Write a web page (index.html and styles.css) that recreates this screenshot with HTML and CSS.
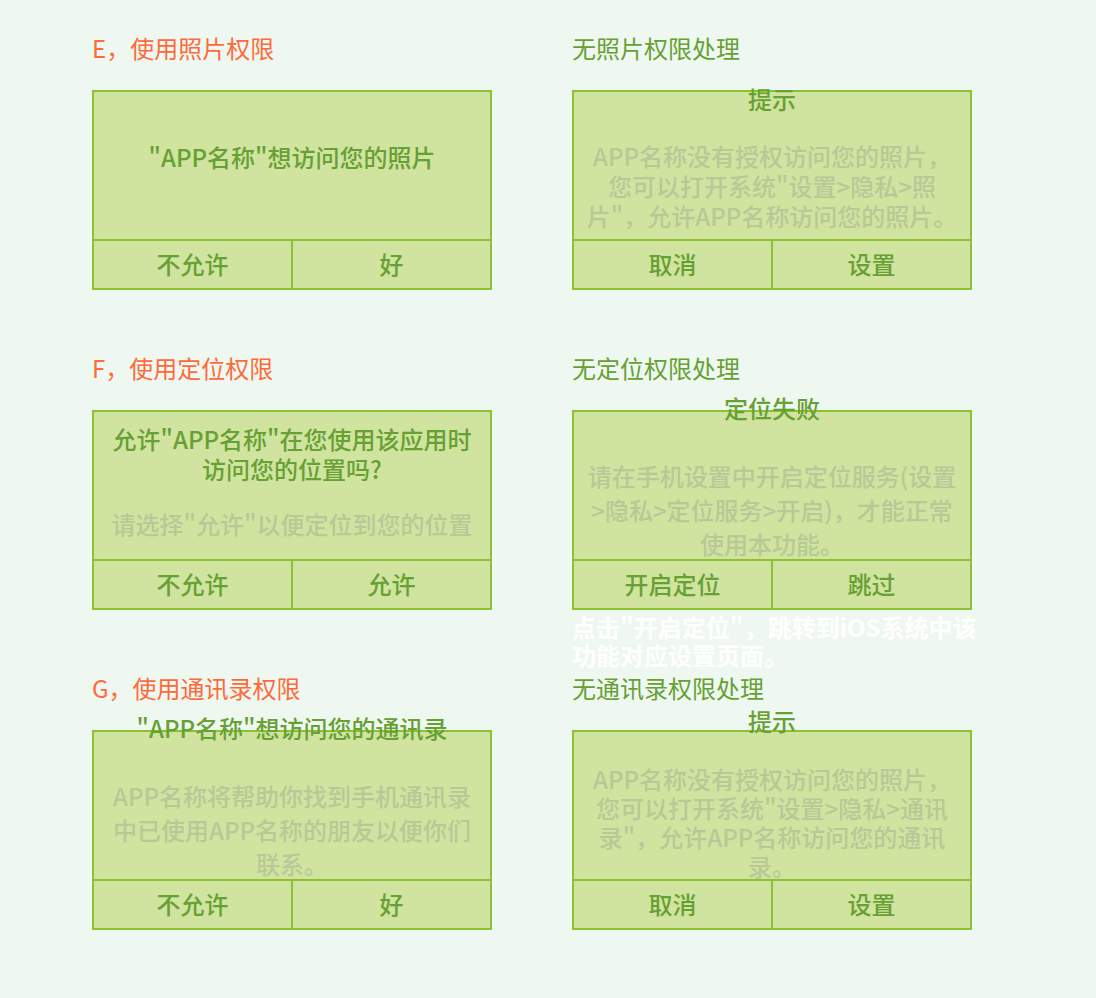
FILE: index.html
```html
<!DOCTYPE html>
<html lang="zh-CN">
<head>
<meta charset="utf-8">
<title>权限处理</title>
<link rel="stylesheet" href="styles.css">
</head>
<body>
<main class="board">
  <section class="cell">
    <h2 class="heading heading-orange">E，使用照片权限</h2>
    <div class="dialog">
      <div class="content">
        <div class="title">"APP名称"想访问您的照片</div>
      </div>
      <div class="actions"><div class="btn">不允许</div><div class="btn">好</div></div>
    </div>
  </section>
  <section class="cell">
    <h2 class="heading heading-green">无照片权限处理</h2>
    <div class="dialog">
      <div class="content">
        <div class="title">提示</div>
        <div class="body">APP名称没有授权访问您的照片，您可以打开系统"设置&gt;隐私&gt;照片"，允许APP名称访问您的照片。</div>
      </div>
      <div class="actions"><div class="btn">取消</div><div class="btn">设置</div></div>
    </div>
  </section>

  <section class="cell">
    <h2 class="heading heading-orange">F，使用定位权限</h2>
    <div class="dialog">
      <div class="content content-low">
        <div class="title">允许"APP名称"在您使用该应用时访问您的位置吗?</div>
        <div class="body body-tight">请选择"允许"以便定位到您的位置</div>
      </div>
      <div class="actions"><div class="btn">不允许</div><div class="btn">允许</div></div>
    </div>
  </section>
  <section class="cell">
    <h2 class="heading heading-green">无定位权限处理</h2>
    <div class="dialog">
      <div class="content">
        <div class="title">定位失败</div>
        <div class="body body-loose">请在手机设置中开启定位服务(设置&gt;隐私&gt;定位服务&gt;开启)，才能正常使用本功能。</div>
      </div>
      <div class="actions"><div class="btn">开启定位</div><div class="btn">跳过</div></div>
    </div>
    <p class="note">点击"开启定位"，跳转到iOS系统中该功能对应设置页面。</p>
  </section>

  <section class="cell">
    <h2 class="heading heading-orange">G，使用通讯录权限</h2>
    <div class="dialog">
      <div class="content">
        <div class="title">"APP名称"想访问您的通讯录</div>
        <div class="body body-loose">APP名称将帮助你找到手机通讯录中已使用APP名称的朋友以便你们联系。</div>
      </div>
      <div class="actions"><div class="btn">不允许</div><div class="btn">好</div></div>
    </div>
  </section>
  <section class="cell">
    <h2 class="heading heading-green">无通讯录权限处理</h2>
    <div class="dialog">
      <div class="content content-high">
        <div class="title">提示</div>
        <div class="body body-dense">APP名称没有授权访问您的照片，您可以打开系统"设置&gt;隐私&gt;通讯录"，允许APP名称访问您的通讯录。</div>
      </div>
      <div class="actions"><div class="btn">取消</div><div class="btn">设置</div></div>
    </div>
  </section>
</main>
</body>
</html>
```

FILE: styles.css
```css
html, body {
  margin: 0;
  padding: 0;
}

body {
  background: #eef8f0;
  font-family: "Noto Sans CJK SC", "Noto Sans", sans-serif;
  font-size: 24px;
  min-height: 998px;
}

.board {
  display: grid;
  grid-template-columns: 400px 400px;
  grid-auto-rows: 320px;
  column-gap: 80px;
  padding: 33px 0 0 92px;
}

.cell {
  display: flex;
  flex-direction: column;
  align-items: flex-start;
  min-width: 0;
}

.heading {
  margin: 0 0 27px;
  font-size: 24px;
  line-height: 30px;
  font-weight: 400;
}

.heading-orange {
  color: #ff6a3a;
}

.heading-green {
  color: #67a033;
}

.dialog {
  box-sizing: border-box;
  width: 400px;
  height: 200px;
  border: 2px solid #8cc232;
  background: #d0e4a0;
  display: flex;
  flex-direction: column;
}

.content {
  flex: 1;
  min-height: 0;
  display: flex;
  flex-direction: column;
  justify-content: center;
  padding: 0 12px 17px;
  text-align: center;
}

.content-low {
  padding-bottom: 8px;
}

.content-high {
  padding-bottom: 25px;
}

.title {
  color: #67a033;
  font-weight: 500;
  line-height: 30px;
}

.body {
  color: #b7c997;
  font-weight: 500;
  line-height: 30px;
  margin-top: 27px;
}

.body-tight {
  margin-top: 25px;
}

.body-loose {
  line-height: 34px;
  margin-top: 36px;
}

.body-dense {
  line-height: 29px;
  margin-top: 28px;
}

.actions {
  box-sizing: border-box;
  height: 49px;
  border-top: 2px solid #8cc232;
  display: flex;
}

.btn {
  flex: 1;
  display: flex;
  align-items: center;
  justify-content: center;
  padding-bottom: 3px;
  color: #67a033;
  font-weight: 500;
}

.btn + .btn {
  border-left: 2px solid #8cc232;
}

.note {
  width: 420px;
  margin: 3px 0 0;
  color: #ffffff;
  font-weight: 700;
  line-height: 28px;
}
```
